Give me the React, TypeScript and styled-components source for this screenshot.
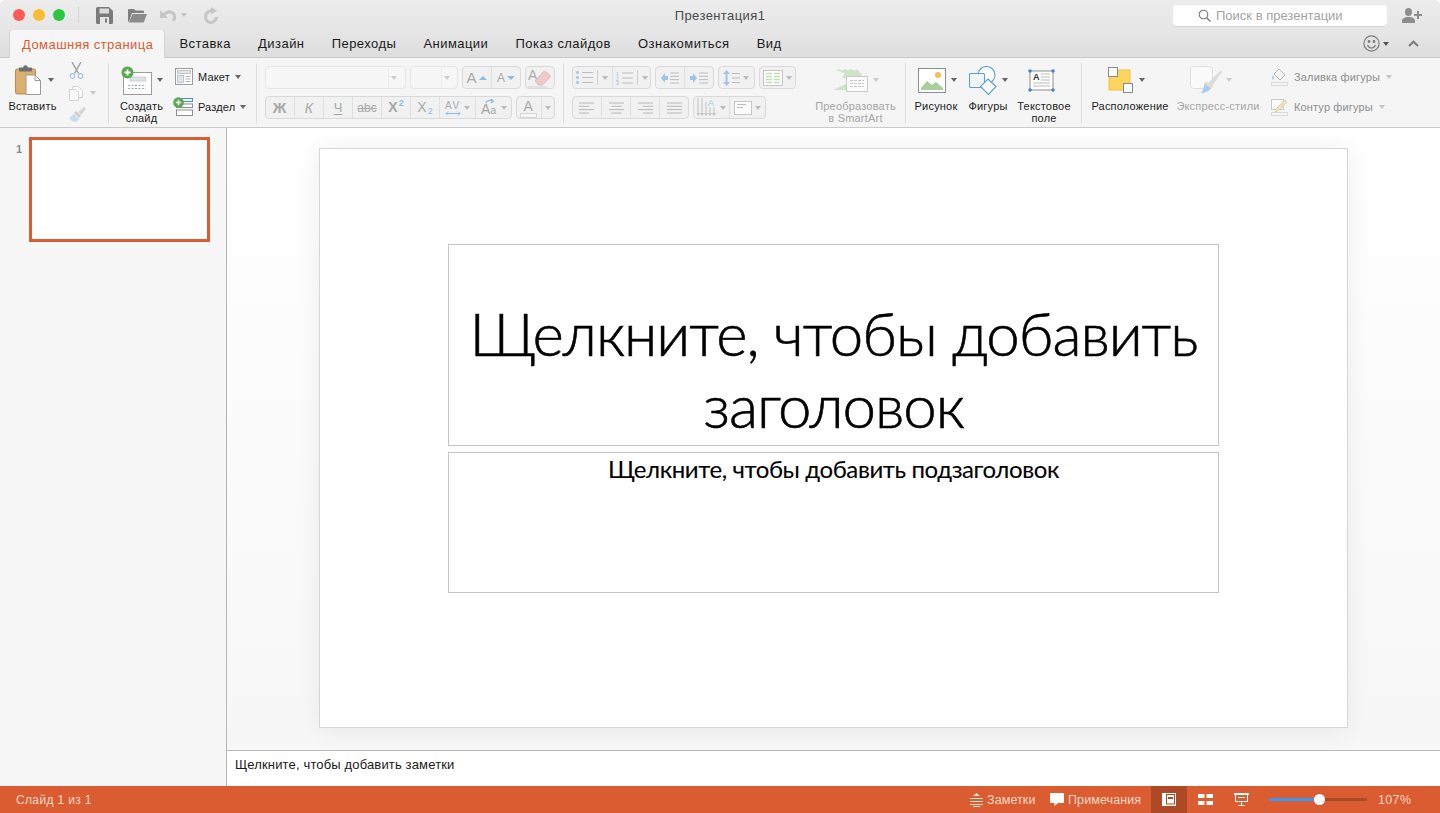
import React from 'react'
import styled, { createGlobalStyle } from 'styled-components'

const GlobalStyle = createGlobalStyle`
	html, body {
		margin: 0;
		padding: 0;
		height: 100%;
		background: #fff;
		overflow: hidden;
	}
	* {
		box-sizing: border-box;
	}
`

const Caret: React.FC<{ color?: string }> = ({ color = '#666' }) => (
	<CaretSvg width="6" height="4" viewBox="0 0 6 4">
		<path d="M0 0h6L3 4z" fill={color} />
	</CaretSvg>
)

const SaveIcon = () => (
	<svg width="17" height="17" viewBox="0 0 17 17">
		<path d="M1.5 0H13l4 4v11.5a1.5 1.5 0 0 1-1.5 1.5h-14A1.5 1.5 0 0 1 0 15.500v-14A1.500 1.500 0 0 1 1.500 0z" fill="#7b7b7b" />
		<rect x="3.500" y="1.500" width="9.500" height="5" fill="#dcdcdc" />
		<rect x="4" y="10" width="9" height="7" fill="#e6e6e6" />
		<rect x="9" y="11.500" width="2" height="4" fill="#7b7b7b" />
	</svg>
)

const FolderIcon = () => (
	<svg width="19" height="15" viewBox="0 0 19 15">
		<path d="M0 2a1 1 0 0 1 1-1h5l1.500 1.500H15a1 1 0 0 1 1 1V5H4L1.200 13 0 14z" fill="#7f7f7f" />
		<path d="M4.500 6H19l-3.300 8.500H.8z" fill="#8c8c8c" />
	</svg>
)

const UndoIcon = () => (
	<svg width="17" height="14" viewBox="0 0 17 14" fill="none">
		<path d="M0 2v8h8z" fill="#c6c6c6" />
		<path d="M3.500 7c2-2.500 4.500-3.500 7-3 2.500.6 4 2.800 4 5 0 1.500-.5 2.800-1 4" stroke="#c6c6c6" strokeWidth="3.200" />
	</svg>
)

const RedoIcon = () => (
	<svg width="14" height="17" viewBox="0 0 14 17" fill="none">
		<path d="M7 0v7.500l6-3.700z" fill="#c6c6c6" />
		<path d="M8.500 3.800C4 3.800 1.600 6.200 1.600 10s2.500 5.500 5.200 5.500 5.700-2.200 5.700-5.500" stroke="#c6c6c6" strokeWidth="3" />
	</svg>
)

const SearchIcon = () => (
	<svg width="13" height="13" viewBox="0 0 13 13" fill="none" stroke="#777" strokeWidth="1.100">
		<circle cx="5.500" cy="5.500" r="4.300" />
		<path d="M8.700 8.700L12.500 12.500" strokeWidth="1.300" />
	</svg>
)

const PersonPlusIcon = () => (
	<svg width="20" height="15" viewBox="0 0 20 15" fill="#8d8d8d">
		<ellipse cx="6.500" cy="4" rx="3.500" ry="4" />
		<path d="M0 15v-2.500c0-2 2.500-3 4.500-3.500h4c2 .5 4.500 1.500 4.500 3.500V15z" />
		<path d="M15 3h2v3h3v2h-3v3h-2V8h-3V6h3z" />
	</svg>
)

const SmileIcon = () => (
	<svg width="17" height="17" viewBox="0 0 17 17" fill="none" stroke="#7c7c7c" strokeWidth="1.200">
		<circle cx="8.500" cy="8.500" r="7.600" />
		<circle cx="6" cy="6.500" r=".8" fill="#7c7c7c" />
		<circle cx="11" cy="6.500" r=".8" fill="#7c7c7c" />
		<path d="M4.500 10c1 2.200 2.500 3 4 3s3-.8 4-3" />
	</svg>
)

const ChevronUpIcon = () => (
	<svg width="11" height="7" viewBox="0 0 11 7" fill="none" stroke="#7c7c7c" strokeWidth="2.200">
		<path d="M1 6l4.500-4.200L10 6" />
	</svg>
)

const PasteIcon = () => (
	<svg width="26" height="30" viewBox="0 0 26 30">
		<rect x="0.500" y="4" width="20" height="25" rx="1.500" fill="#dcaf6e" stroke="#b98d4e" />
		<rect x="4" y="2.500" width="13" height="4" rx="1" fill="#6f6f6f" />
		<circle cx="10.500" cy="2.500" r="2.200" fill="#6f6f6f" />
		<path d="M11 10h9l5.500 5.500V29.500H11z" fill="#fff" stroke="#9a9a9a" />
		<path d="M20 10v5.500h5.500" fill="none" stroke="#9a9a9a" />
	</svg>
)

const ScissorsIcon = () => (
	<svg width="15" height="17" viewBox="0 0 15 17" fill="none">
		<path d="M3 0l6.500 11.500M12 0L5.500 11.500" stroke="#a2a2a2" strokeWidth="1.500" />
		<circle cx="3.500" cy="14" r="2.300" stroke="#a5c5e5" strokeWidth="1.200" />
		<circle cx="11.500" cy="14" r="2.300" stroke="#a5c5e5" strokeWidth="1.200" />
	</svg>
)

const CopyIcon = () => (
	<svg width="14" height="15" viewBox="0 0 14 15" fill="#fafafa" stroke="#d2d2d2">
		<path d="M3.500 .5h6l4 4v7h-10z" />
		<path d="M.5 3.500h6l3 3v8h-9z" />
	</svg>
)

const BrushIcon = () => (
	<svg width="17" height="15" viewBox="0 0 17 15">
		<path d="M9 5l6-5 2 2-5 6z" fill="#d6d6d6" />
		<path d="M7 4l5 5-2 2-5-5z" fill="#cdcdcd" />
		<path d="M4.500 6.500L10 12l-3 3C4 15 1 13 0 10.500c2 0 3.500-2 4.500-4z" fill="#c7dcef" />
	</svg>
)

const NewSlideIcon = () => (
	<svg width="31" height="29" viewBox="0 0 31 29">
		<rect x="2.500" y="6.500" width="28" height="22" fill="#fff" stroke="#9c9c9c" />
		<rect x="9" y="11" width="16" height="4" fill="#dfe3e8" stroke="#b8bec6" strokeWidth=".6" />
		<path d="M7 19.500h18M7 22.500h18" stroke="#8eb4da" strokeDasharray="2 1.500" />
		<circle cx="6.500" cy="6.500" r="6" fill="#5aa84f" />
		<path d="M6.500 3.500v6M3.500 6.500h6" stroke="#fff" strokeWidth="1.800" />
	</svg>
)

const LayoutIcon = () => (
	<svg width="18" height="17" viewBox="0 0 18 17" fill="#fff" stroke="#9d9d9d">
		<rect x=".5" y=".5" width="17" height="16" />
		<rect x="2.500" y="2.500" width="13" height="3" fill="#e6e6e6" stroke="#b2b2b2" strokeWidth=".7" />
		<rect x="2.500" y="7.500" width="6" height="7" fill="#dce3ea" stroke="#a8b4c0" strokeWidth=".7" />
		<path d="M10.500 8.500h5M10.500 11h5M10.500 13.500h5" stroke="#a0a0a0" strokeWidth=".8" />
	</svg>
)

const SectionIcon = () => (
	<SectionSvg width="20" height="19" viewBox="0 0 20 19" fill="none">
		<rect x="8.500" y="1.500" width="11" height="3" stroke="#4a90d9" />
		<rect x="3.500" y="7" width="16" height="3.500" fill="#fff" stroke="#8f8f8f" />
		<rect x="3.500" y="13" width="16" height="5.500" fill="#fff" stroke="#8f8f8f" />
		<circle cx="5.500" cy="5.500" r="5.300" fill="#5aa84f" />
		<path d="M5.500 2.800v5.400M2.800 5.500h5.400" stroke="#fff" strokeWidth="1.500" />
	</SectionSvg>
)

const EraserIcon = () => (
	<svg width="24" height="21" viewBox="0 0 24 21">
		<text x="0" y="13" fontFamily="Liberation Sans" fontSize="14" fill="#aaa">A</text>
		<path d="M7 14l8-9c1-1 2-1 3 0l3.500 3c1 1 1 2 0 3l-7 7h-4z" fill="#efcaca" stroke="#d5aeae" strokeWidth=".7" />
		<path d="M0 20h20" stroke="#d2d2d2" />
	</svg>
)

const CharSpacingIcon = () => (
	<svg width="16" height="16" viewBox="0 0 16 16">
		<text x="0" y="9" fontFamily="Liberation Sans" fontSize="10" letterSpacing="1.500" fill="#aaa">AV</text>
		<path d="M1 13.500h14M3 11.500l-2 2 2 2M13 11.500l2 2-2 2" fill="none" stroke="#8dbbe8" />
	</svg>
)

const ChangeCaseIcon = () => (
	<svg width="17" height="17" viewBox="0 0 17 17">
		<text x="0" y="15" fontFamily="Liberation Sans" fontSize="14" fill="#a3a3a3">A</text>
		<text x="9.500" y="15" fontFamily="Liberation Sans" fontSize="10" fill="#a3a3a3">a</text>
		<path d="M5 4c1-2.500 4-3 7-2M10 0l2.500 2-2.500 2" fill="none" stroke="#8dbbe8" strokeWidth="1.200" />
	</svg>
)

const FontColorIcon = () => (
	<svg width="18" height="20" viewBox="0 0 18 20">
		<text x="3.500" y="13" fontFamily="Liberation Sans" fontSize="14" fill="#a9a9a9">A</text>
		<rect x=".5" y="15.500" width="16" height="4" fill="#f6f6f6" stroke="#d6d6d6" />
	</svg>
)

const BulletsIcon = () => (
	<svg width="17" height="13" viewBox="0 0 17 13">
		<circle cx="1.500" cy="1.500" r="1.400" fill="#9fc4e8" />
		<circle cx="1.500" cy="6.500" r="1.400" fill="#9fc4e8" />
		<circle cx="1.500" cy="11.500" r="1.400" fill="#9fc4e8" />
		<path d="M6 1.500h11M6 6.500h11M6 11.500h11" stroke="#bdbdbd" />
	</svg>
)

const NumberedIcon = () => (
	<svg width="17" height="14" viewBox="0 0 17 14">
		<text x="0" y="4.500" fontFamily="Liberation Sans" fontSize="5" fill="#8dbbe8">1</text>
		<text x="0" y="9.500" fontFamily="Liberation Sans" fontSize="5" fill="#8dbbe8">2</text>
		<text x="0" y="14" fontFamily="Liberation Sans" fontSize="5" fill="#8dbbe8">3</text>
		<path d="M6 2h11M6 7h11M6 12h11" stroke="#bdbdbd" />
	</svg>
)

const IndentIcon: React.FC<{ right?: boolean }> = ({ right }) => (
	<svg width="18" height="12" viewBox="0 0 18 12">
		<path d={right ? 'M0 4h3V1l4 5-4 5V8H0z' : 'M7 4H4V1L0 6l4 5V8h3z'} fill="#9fc4e8" />
		<path d="M9 1h9M9 4.300h9M9 7.600h9M9 11h9" stroke="#bdbdbd" />
	</svg>
)

const LineSpacingIcon = () => (
	<svg width="17" height="16" viewBox="0 0 17 16">
		<path d="M3.500 0L7 4H0zM3.500 16L0 12h7z" fill="#9fc4e8" />
		<path d="M2.500 4h2v8h-2z" fill="#9fc4e8" />
		<path d="M9 3.500h8M9 8h8M9 12.500h8" stroke="#bdbdbd" />
	</svg>
)

const ColumnsIcon = () => (
	<svg width="20" height="16" viewBox="0 0 20 16">
		<rect x=".5" y=".5" width="19" height="15" fill="#fff" stroke="#c6c6c6" />
		<path d="M3 3.500h6M3 6.500h6M3 9.500h6M3 12.500h6M11 3.500h6M11 6.500h6M11 9.500h6M11 12.500h6" stroke="#c0e0b8" strokeWidth="1.500" />
	</svg>
)

const AlignIcon: React.FC<{ kind: 'left' | 'center' | 'right' | 'justify' }> = ({ kind }) => {
	const lines = {
		left: 'M0 1h15M0 4.300h10M0 7.600h15M0 11h10',
		center: 'M0 1h15M2.500 4.300h10M0 7.600h15M2.500 11h10',
		right: 'M0 1h15M5 4.300h10M0 7.600h15M5 11h10',
		justify: 'M0 1h15M0 4.300h15M0 7.600h15M0 11h15',
	}
	return (
		<svg width="15" height="12" viewBox="0 0 15 12">
			<path d={lines[kind]} stroke="#b8b8b8" />
		</svg>
	)
}

const TextDirIcon = () => (
	<svg width="20" height="19" viewBox="0 0 20 19">
		<path d="M1 0v15M5 0v15M9 4v11M13 9v6M17 9v6" stroke="#c2c2c2" />
		<path d="M-1 15l2 3 2-3zM3 15l2 3 2-3zM7 15l2 3 2-3zM11 15l2 3 2-3zM15 15l2 3 2-3z" fill="#c2c2c2" />
		<text x="11" y="8" fontFamily="Liberation Sans" fontSize="9" fill="#9fc4e8">A</text>
	</svg>
)

const TextAlignBoxIcon = () => (
	<svg width="18" height="14" viewBox="0 0 18 14">
		<rect x=".5" y=".5" width="17" height="13" fill="#fbfbfb" stroke="#c6c6c6" />
		<path d="M3 3.500h9M3 6.500h6" stroke="#bdbdbd" />
	</svg>
)

const SmartArtIcon = () => (
	<svg width="35" height="24" viewBox="0 0 35 24">
		<path d="M0 1l3 1.500L6 1l3 1.500L12 1l3 1.500L18 1l3 1.500L24 1l5 6v3l-6 1L9 10l3-4.500z" fill="#cfe4c6" />
		<path d="M0 22h20l6-11-8-1-5 6z" fill="#cfe4c6" />
		<rect x="13.500" y="8.500" width="21" height="15" fill="#fbfbfb" stroke="#c9c9c9" />
		<path d="M17 12.500h14M17 15.500h14M17 18.500h14" stroke="#c9c9c9" strokeDasharray="3 1" />
	</svg>
)

const PictureIcon = () => (
	<svg width="28" height="25" viewBox="0 0 28 25">
		<rect x=".5" y=".5" width="27" height="24" fill="#fff" stroke="#8f8f8f" />
		<path d="M3 20l6-7 5 4 4-3 7 6z" fill="#a9cf9b" />
		<path d="M3 22h22v-2H3z" fill="#a9cf9b" />
		<circle cx="20" cy="7" r="3" fill="#f2c14e" />
	</svg>
)

const ShapesIcon = () => (
	<svg width="28" height="29" viewBox="0 0 28 29" fill="none" stroke="#5a9de0" strokeWidth="1.100">
		<circle cx="17.500" cy="9" r="8.500" fill="#fff" />
		<rect x=".5" y="7.500" width="15" height="14" rx="1" fill="#f2f7fc" />
		<path d="M19 13l8 7.500-7.500 8-8-8z" fill="#fff" />
	</svg>
)

const TextBoxIcon = () => (
	<svg width="27" height="23" viewBox="0 0 27 23">
		<rect x="2" y="2" width="23" height="19" fill="#fff" stroke="#8e8e8e" />
		<text x="5" y="11" fontFamily="Liberation Sans" fontWeight="700" fontSize="9" fill="#333">A</text>
		<path d="M13 5h9M13 8h9M13 11h9M5 14h17M5 17h17" stroke="#a8a8a8" strokeWidth=".8" />
		<g fill="#3f86d6">
			<circle cx="2" cy="2" r="1.800" />
			<circle cx="25" cy="2" r="1.800" />
			<circle cx="2" cy="21" r="1.800" />
			<circle cx="25" cy="21" r="1.800" />
		</g>
	</svg>
)

const ArrangeIcon = () => (
	<svg width="26" height="26" viewBox="0 0 26 26">
		<rect x="1" y="3" width="21" height="20" fill="#fdd45e" stroke="#efc243" />
		<rect x=".5" y=".5" width="9" height="9" fill="#fff" stroke="#8a8a8a" />
		<rect x="15.500" y="16.500" width="9" height="9" fill="#fff" stroke="#8a8a8a" />
	</svg>
)

const QuickStylesIcon = () => (
	<svg width="33" height="28" viewBox="0 0 33 28">
		<rect x=".5" y=".5" width="22" height="22" rx="3" fill="#fafafa" stroke="#dedede" />
		<path d="M18 17L30 5c1.200-1 2.500 0 1.800 1.500L22 20z" fill="#dcdcdc" />
		<path d="M16 15.500l7 5-1.500 1.500-7-4.500z" fill="#e9dcbc" />
		<path d="M14.500 17.500l6.500 4.500c-2 3.500-6 5-10 5 2-2 3-6 3.500-9.500z" fill="#a9cbed" />
	</svg>
)

const FillIcon = () => (
	<svg width="17" height="18" viewBox="0 0 17 18">
		<path d="M8 1l6 6-5 5-6-6z" fill="#f4f4f4" stroke="#b9b9b9" />
		<path d="M2 7c-1 2-1.500 3-1 4s2 .5 2-1z" fill="#a9cbed" />
		<rect x=".5" y="14.500" width="16" height="3" fill="#f6f6f6" stroke="#dadada" />
	</svg>
)

const OutlineIcon = () => (
	<svg width="17" height="18" viewBox="0 0 17 18">
		<rect x=".5" y="1.500" width="12" height="10" fill="#fafafa" stroke="#c9c9c9" />
		<path d="M5 11l9-9 2 2-9 9-3 1z" fill="#efe1b8" stroke="#cdbb8d" strokeWidth=".5" />
		<rect x=".5" y="14.500" width="16" height="3" fill="#f6f6f6" stroke="#dadada" />
	</svg>
)

const NotesIcon = () => (
	<svg width="13" height="14" viewBox="0 0 13 14" fill="#fbe5da">
		<path d="M6.500 0L10 3H3z" />
		<path d="M0 5h13v1H0zM0 8h13v1H0zM0 11h13v1H0zM3 13h7v1H3z" />
	</svg>
)

const CommentIcon = () => (
	<svg width="14" height="13" viewBox="0 0 14 13" fill="#fff">
		<path d="M1 0h12a1 1 0 0 1 1 1v8a1 1 0 0 1-1 1H8l-3.500 3V10H1a1 1 0 0 1-1-1V1a1 1 0 0 1 1-1z" />
	</svg>
)

const NormalViewIcon = () => (
	<svg width="14" height="13" viewBox="0 0 14 13">
		<path d="M0 0h14v13H0z" fill="#fff" />
		<path d="M4 1h9v10.500H4z" fill="#ad4925" />
		<path d="M5 2h7v8.500H5z" fill="#fff" />
		<rect x="6" y="4" width="5" height="2" fill="#ad4925" />
	</svg>
)

const GridViewIcon = () => (
	<svg width="15" height="11" viewBox="0 0 15 11" fill="#fff">
		<rect width="6.500" height="4" />
		<rect x="8.500" width="6.500" height="4" />
		<rect y="7" width="6.500" height="4" />
		<rect x="8.500" y="7" width="6.500" height="4" />
	</svg>
)

const PresenterIcon = () => (
	<svg width="15" height="13" viewBox="0 0 15 13" fill="none" stroke="#fff">
		<path d="M0 1h15" strokeWidth="2" />
		<rect x="1.500" y="1.500" width="12" height="7" />
		<path d="M4 4.500h7" />
		<path d="M7.500 8.500v3.500M4.500 12.500h6" />
	</svg>
)

const App: React.FC = () => {
	return (
		<>
			<GlobalStyle />
			<Window>
				<TitleBar>
					<QuickTools>
						<TrafficLights>
							<Light $color="#fc5b57" />
							<Light $color="#fdbb2e" />
							<Light $color="#28c83f" />
						</TrafficLights>
						<TitleSep />
						<QuickSlot $left={17}><SaveIcon /></QuickSlot>
						<QuickSlot $left={15}><FolderIcon /></QuickSlot>
						<QuickSlot $left={13}><UndoIcon /><Caret color="#c4c4c4" /></QuickSlot>
						<QuickSlot $left={17}><RedoIcon /></QuickSlot>
					</QuickTools>
					<WindowTitle>Презентация1</WindowTitle>
					<TitleRight>
						<SearchBox>
							<SearchIcon />
							<SearchText>Поиск в презентации</SearchText>
						</SearchBox>
						<PersonPlusIcon />
					</TitleRight>
				</TitleBar>

				<TabBar>
					<Tab $active>Домашняя страница</Tab>
					<Tab>Вставка</Tab>
					<Tab>Дизайн</Tab>
					<Tab>Переходы</Tab>
					<Tab>Анимации</Tab>
					<Tab>Показ слайдов</Tab>
					<Tab>Ознакомиться</Tab>
					<Tab>Вид</Tab>
					<TabBarRight>
						<SmileWrap><SmileIcon /><Caret color="#555" /></SmileWrap>
						<ChevronUpIcon />
					</TabBarRight>
				</TabBar>

				<Ribbon>
					<RibbonGroup $width={108}>
						<LargeButton $width={57} $shift={4}>
							<LargeIconRow $padLeft={4} $gap={7}>
								<PasteIcon />
								<Caret />
							</LargeIconRow>
							<LargeLabel>Вставить</LargeLabel>
						</LargeButton>
						<ClipColumn>
							<ScissorsIcon />
							<ClipRow><CopyIcon /><Caret color="#c8c8c8" /></ClipRow>
							<BrushIcon />
						</ClipColumn>
					</RibbonGroup>
					<GroupSep />

					<RibbonGroup $width={147}>
						<LargeButton $width={65}>
							<LargeIconRow>
								<NewSlideIcon />
								<Caret />
							</LargeIconRow>
							<LargeLabel>Создать<br />слайд</LargeLabel>
						</LargeButton>
						<SmallColumn $left={1}>
							<SmallRow><LayoutIcon /><SmallText>Макет</SmallText><Caret /></SmallRow>
							<SmallRow><SectionIcon /><SmallText>Раздел</SmallText><Caret /></SmallRow>
						</SmallColumn>
					</RibbonGroup>
					<GroupSep />

					<ToolsGroup $width={306}>
						<ToolRow>
							<ComboBox $width={141} $field={122}><Caret color="#ccc" /></ComboBox>
							<ComboBox $width={48} $field={30}><Caret color="#ccc" /></ComboBox>
							<ToolGroup>
								<ToolButton $width={29}><BigA>A</BigA><Tri $color="#8dbbe8" /></ToolButton>
								<ToolButton $width={29}><MidA>A</MidA><Tri $color="#8dbbe8" $down /></ToolButton>
							</ToolGroup>
							<ToolGroup>
								<ToolButton $width={29}><EraserIcon /></ToolButton>
							</ToolGroup>
						</ToolRow>
						<ToolRow>
							<ToolGroup>
								<ToolButton $width={29}><BoldGlyph>Ж</BoldGlyph></ToolButton>
								<ToolButton $width={29}><ItalicGlyph>К</ItalicGlyph></ToolButton>
								<ToolButton $width={29}><UnderGlyph>Ч</UnderGlyph></ToolButton>
								<ToolButton $width={29}><StrikeGlyph>abc</StrikeGlyph></ToolButton>
								<ToolButton $width={29}><ScriptGlyph $bold>X<Sup>2</Sup></ScriptGlyph></ToolButton>
								<ToolButton $width={29}><ScriptGlyph>X<Sub>2</Sub></ScriptGlyph></ToolButton>
								<ToolButton $width={36}><CharSpacingIcon /><Caret color="#bbb" /></ToolButton>
								<ToolButton $width={36}><ChangeCaseIcon /><Caret color="#bbb" /></ToolButton>
							</ToolGroup>
							<ToolGroup>
								<ToolButton $width={25}><FontColorIcon /></ToolButton>
								<ToolButton $width={13}><Caret color="#bbb" /></ToolButton>
							</ToolGroup>
						</ToolRow>
					</ToolsGroup>
					<GroupSep />

					<ToolsGroup $width={242}>
						<ToolRow>
							<ToolGroup>
								<ToolButton $width={40}><BulletsIcon /><InnerSep /><Caret color="#bbb" /></ToolButton>
								<ToolButton $width={38}><NumberedIcon /><InnerSep /><Caret color="#bbb" /></ToolButton>
							</ToolGroup>
							<ToolGroup>
								<ToolButton $width={29}><IndentIcon /></ToolButton>
								<ToolButton $width={29}><IndentIcon right /></ToolButton>
							</ToolGroup>
							<ToolGroup>
								<ToolButton $width={36}><LineSpacingIcon /><Caret color="#bbb" /></ToolButton>
							</ToolGroup>
							<ToolGroup>
								<ToolButton $width={36}><ColumnsIcon /><Caret color="#bbb" /></ToolButton>
							</ToolGroup>
						</ToolRow>
						<ToolRow>
							<ToolGroup>
								<ToolButton $width={29}><AlignIcon kind="left" /></ToolButton>
								<ToolButton $width={29}><AlignIcon kind="center" /></ToolButton>
								<ToolButton $width={29}><AlignIcon kind="right" /></ToolButton>
								<ToolButton $width={29}><AlignIcon kind="justify" /></ToolButton>
							</ToolGroup>
							<ToolGroup>
								<ToolButton $width={36}><TextDirIcon /><Caret color="#bbb" /></ToolButton>
								<ToolButton $width={36}><TextAlignBoxIcon /><Caret color="#bbb" /></ToolButton>
							</ToolGroup>
						</ToolRow>
					</ToolsGroup>
					<LargeButton $width={99} $disabled>
						<LargeIconRow>
							<SmartArtIcon />
							<Caret color="#ccc" />
						</LargeIconRow>
						<LargeLabel>Преобразовать<br />в SmartArt</LargeLabel>
					</LargeButton>
					<GroupSep />

					<RibbonGroup $width={175}>
						<LargeButton $width={60}>
							<LargeIconRow $padLeft={2}>
								<PictureIcon />
								<Caret />
							</LargeIconRow>
							<LargeLabel>Рисунок</LargeLabel>
						</LargeButton>
						<LargeButton $width={44}>
							<LargeIconRow>
								<ShapesIcon />
								<Caret />
							</LargeIconRow>
							<LargeLabel>Фигуры</LargeLabel>
						</LargeButton>
						<LargeButton $width={68}>
							<LargeIconRow $padRight={6}>
								<TextBoxIcon />
							</LargeIconRow>
							<LargeLabel>Текстовое<br />поле</LargeLabel>
						</LargeButton>
					</RibbonGroup>
					<GroupSep />

					<RibbonGroup $width={0}>
						<LargeButton $width={96}>
							<LargeIconRow $padRight={8}>
								<ArrangeIcon />
								<Caret />
							</LargeIconRow>
							<LargeLabel>Расположение</LargeLabel>
						</LargeButton>
						<LargeButton $width={86} $shift={-3} $disabled>
							<LargeIconRow $padRight={14} $gap={3}>
								<QuickStylesIcon />
								<Caret color="#ccc" />
							</LargeIconRow>
							<LargeLabel>Экспресс-стили</LargeLabel>
						</LargeButton>
						<SmallColumn $left={10}>
							<SmallRow $muted><FillIcon /><SmallText>Заливка фигуры</SmallText><Caret color="#c4c4c4" /></SmallRow>
							<SmallRow $muted><OutlineIcon /><SmallText>Контур фигуры</SmallText><Caret color="#c4c4c4" /></SmallRow>
						</SmallColumn>
					</RibbonGroup>
				</Ribbon>

				<Workspace>
					<SlidePane>
						<SlideNumber>1</SlideNumber>
						<Thumbnail />
					</SlidePane>
					<EditorColumn>
						<Canvas>
							<Slide>
								<TitlePlaceholder>Щелкните, чтобы добавить заголовок</TitlePlaceholder>
								<SubtitlePlaceholder>Щелкните, чтобы добавить подзаголовок</SubtitlePlaceholder>
							</Slide>
						</Canvas>
						<NotesPane>Щелкните, чтобы добавить заметки</NotesPane>
					</EditorColumn>
				</Workspace>

				<StatusBar>
					<SlideCount>Слайд 1 из 1</SlideCount>
					<StatusRight>
						<StatusItem $width={80}><NotesIcon />Заметки</StatusItem>
						<StatusItem $width={101}><CommentIcon />Примечания</StatusItem>
						<ViewTab $active><NormalViewIcon /></ViewTab>
						<ViewTab><GridViewIcon /></ViewTab>
						<ViewTab><PresenterIcon /></ViewTab>
						<ZoomSlider>
							<ZoomFill />
							<ZoomThumb />
							<ZoomRest />
						</ZoomSlider>
						<ZoomValue>107%</ZoomValue>
					</StatusRight>
				</StatusBar>
			</Window>
		</>
	)
}

const uiFont = `'Liberation Sans', Arial, sans-serif`
const slideFont = `Lato, 'Open Sans', sans-serif`

const CaretSvg = styled.svg`
	flex: none;
`

const SectionSvg = styled.svg`
	margin-left: -2px;
`

const Window = styled.div`
	display: flex;
	flex-direction: column;
	width: 1440px;
	height: 813px;
	overflow: hidden;
	border-radius: 5px 5px 0 0;
	font-family: ${uiFont};
	background: #fff;
`

const TitleBar = styled.div`
	display: flex;
	align-items: center;
	position: relative;
	height: 30px;
	flex: none;
	background: linear-gradient(#ececec, #e6e6e6);
	padding-right: 18px;
`

const QuickTools = styled.div`
	display: flex;
	align-items: center;
	flex: 1;
	padding-left: 13px;
`

const TrafficLights = styled.div`
	display: flex;
	gap: 8px;
`

const Light = styled.span<{ $color: string }>`
	width: 12px;
	height: 12px;
	border-radius: 50%;
	background: ${(props) => props.$color};
`

const TitleSep = styled.span`
	width: 1px;
	height: 16px;
	margin-left: 13px;
	background: #d4d4d4;
`

const QuickSlot = styled.span<{ $left: number }>`
	display: flex;
	align-items: center;
	gap: 4px;
	margin-left: ${(props) => props.$left}px;
`

const WindowTitle = styled.div`
	position: absolute;
	left: 0;
	right: 0;
	text-align: center;
	font-size: 13px;
	letter-spacing: 0.4px;
	color: #4a4a4a;
	pointer-events: none;
`

const TitleRight = styled.div`
	display: flex;
	align-items: center;
	gap: 15px;
`

const SearchBox = styled.div`
	display: flex;
	align-items: center;
	gap: 5px;
	width: 214px;
	height: 21px;
	padding-left: 25px;
	background: #fff;
	border-radius: 4px;
	box-shadow: 0 1px 0 #d6d6d6;
`

const SearchText = styled.span`
	font-size: 13px;
	color: #a3a3a3;
`

const TabBar = styled.div`
	display: flex;
	align-items: flex-end;
	height: 28px;
	flex: none;
	padding-left: 10px;
	background: linear-gradient(#e6e6e6, #dedede);
	border-bottom: 1px solid #c9c9c9;
`

const Tab = styled.div<{ $active?: boolean }>`
	display: flex;
	align-items: center;
	height: ${(props) => (props.$active ? '28px' : '27px')};
	margin-bottom: ${(props) => (props.$active ? '-1px' : '0')};
	margin-right: ${(props) => (props.$active ? '1.500px' : '0')};
	padding: ${(props) => (props.$active ? '0 11px 0 12px' : '0 13.600px')};
	font-size: 13px;
	letter-spacing: 0.45px;
	color: ${(props) => (props.$active ? '#dc5c31' : '#1a1a1a')};
	background: ${(props) => (props.$active ? '#f6f6f6' : 'transparent')};
	border-radius: ${(props) => (props.$active ? '3px 3px 0 0' : '0')};
	box-shadow: ${(props) => (props.$active ? '0 0 0 1px #d4d4d4' : 'none')};
`

const TabBarRight = styled.div`
	display: flex;
	align-items: center;
	align-self: center;
	gap: 19px;
	margin-left: auto;
	padding-right: 21px;
`

const SmileWrap = styled.span`
	display: flex;
	align-items: center;
	gap: 3px;
`

const Ribbon = styled.div`
	display: flex;
	align-items: center;
	height: 70px;
	flex: none;
	background: #f5f5f5;
	border-bottom: 1px solid #cbcbcb;
`

const RibbonGroup = styled.div<{ $width: number }>`
	display: flex;
	align-items: flex-start;
	height: 100%;
	width: ${(props) => (props.$width ? `${props.$width}px` : 'auto')};
	flex: ${(props) => (props.$width ? 'none' : '1')};
`

const GroupSep = styled.div`
	width: 1px;
	height: 60px;
	flex: none;
	background: #dedede;
`

const LargeButton = styled.div<{ $width: number; $shift?: number; $disabled?: boolean }>`
	display: flex;
	flex-direction: column;
	align-items: center;
	flex: none;
	width: ${(props) => props.$width}px;
	margin-left: ${(props) => props.$shift || 0}px;
	height: 100%;
	color: ${(props) => (props.$disabled ? '#a6a6a6' : '#1c1c1c')};
`

const LargeIconRow = styled.div<{ $padLeft?: number; $padRight?: number; $gap?: number }>`
	display: flex;
	align-items: center;
	justify-content: center;
	gap: ${(props) => props.$gap ?? 5}px;
	height: 30px;
	margin-top: 7px;
	margin-bottom: 5px;
	padding-left: ${(props) => props.$padLeft || 0}px;
	padding-right: ${(props) => props.$padRight || 0}px;
`

const LargeLabel = styled.div`
	font-size: 11px;
	line-height: 12px;
	letter-spacing: 0.2px;
	text-align: center;
	white-space: nowrap;
`

const ClipColumn = styled.div`
	display: flex;
	flex-direction: column;
	align-items: flex-start;
	justify-content: space-between;
	height: 60px;
	margin-top: 4px;
	padding-left: 8px;
	width: 40px;
`

const ClipRow = styled.div`
	display: flex;
	align-items: center;
	gap: 7px;
`

const SmallColumn = styled.div<{ $left: number }>`
	display: flex;
	flex-direction: column;
	gap: 11px;
	margin-left: ${(props) => props.$left}px;
	padding-top: 9px;
`

const SmallRow = styled.div<{ $muted?: boolean }>`
	display: flex;
	align-items: center;
	gap: ${(props) => (props.$muted ? '6px' : '5px')};
	height: 19px;
	color: ${(props) => (props.$muted ? '#8e8e8e' : '#1c1c1c')};
`

const SmallText = styled.span`
	font-size: 11px;
	letter-spacing: 0.15px;
	white-space: nowrap;
`

const ToolsGroup = styled.div<{ $width: number }>`
	display: flex;
	flex-direction: column;
	gap: 7px;
	flex: none;
	align-self: flex-start;
	width: ${(props) => props.$width}px;
	padding-left: 8px;
	padding-top: 8px;
`

const ToolRow = styled.div`
	display: flex;
	gap: 4px;
`

const ToolGroup = styled.div`
	display: flex;
	height: 23px;
	border: 1px solid #d9d9d9;
	border-radius: 4px;
	background: #f1f1f1;
	overflow: hidden;
`

const ToolButton = styled.div<{ $width: number }>`
	display: flex;
	align-items: center;
	justify-content: center;
	gap: 3px;
	width: ${(props) => props.$width}px;
	color: #a8a8a8;
	&:not(:first-child) {
		border-left: 1px solid #dfdfdf;
	}
	&:first-child {
		margin-left: -1px;
	}
`

const ComboBox = styled.div<{ $width: number; $field: number }>`
	display: flex;
	align-items: center;
	width: ${(props) => props.$width}px;
	height: 23px;
	padding-left: ${(props) => props.$field + 3}px;
	border: 1px solid #e6e6e6;
	border-radius: 4px;
	background: linear-gradient(to right, #f7f7f7 ${(props) => props.$field}px, #ececec ${(props) => props.$field}px, #ececec ${(props) => props.$field + 1}px, #f7f7f7 ${(props) => props.$field + 1}px);
`

const InnerSep = styled.span`
	width: 1px;
	height: 15px;
	background: #cfcfcf;
	margin: 0 1px;
`

const BigA = styled.span`
	font-size: 15px;
`

const MidA = styled.span`
	font-size: 12px;
`

const Tri = styled.span<{ $color: string; $down?: boolean }>`
	width: 0;
	height: 0;
	margin-left: -1px;
	border-left: 4px solid transparent;
	border-right: 4px solid transparent;
	border-${(props) => (props.$down ? 'top' : 'bottom')}: 4px solid ${(props) => props.$color};
`

const BoldGlyph = styled.span`
	font-size: 15px;
	font-weight: 700;
`

const ItalicGlyph = styled.span`
	font-size: 14px;
	font-style: italic;
`

const UnderGlyph = styled.span`
	font-size: 13px;
	text-decoration: underline;
	text-underline-offset: 2px;
`

const StrikeGlyph = styled.span`
	font-size: 12px;
	text-decoration: line-through;
`

const ScriptGlyph = styled.span<{ $bold?: boolean }>`
	display: flex;
	align-items: center;
	height: 19px;
	line-height: 19px;
	font-size: 14px;
	font-weight: ${(props) => (props.$bold ? 700 : 400)};
	color: #a8a8a8;
`

const Sup = styled.span`
	align-self: flex-start;
	height: 11px;
	line-height: 11px;
	margin-left: 1px;
	font-size: 9px;
	color: #8dbbe8;
`

const Sub = styled.span`
	align-self: flex-end;
	height: 11px;
	line-height: 11px;
	margin-left: 1px;
	font-size: 9px;
	color: #8dbbe8;
`

const Workspace = styled.div`
	display: flex;
	flex: 1;
	min-height: 0;
`

const SlidePane = styled.div`
	display: flex;
	align-items: flex-start;
	flex: none;
	width: 227px;
	padding: 9px 0 0 16px;
	background: #f7f7f7;
	border-right: 1px solid #b5b5b5;
`

const SlideNumber = styled.div`
	width: 13px;
	font-size: 11px;
	line-height: 24px;
	font-weight: 700;
	color: #8a8a8a;
`

const Thumbnail = styled.div`
	width: 181px;
	height: 105px;
	background: #fff;
	border: 3px solid #dc5c31;
`

const EditorColumn = styled.div`
	display: flex;
	flex-direction: column;
	flex: 1;
	min-width: 0;
`

const Canvas = styled.div`
	display: flex;
	flex: 1;
	min-height: 0;
	padding: 20px 92px 22px 92px;
	background: linear-gradient(#fff, #f7f7f7);
`

const Slide = styled.div`
	display: flex;
	flex-direction: column;
	flex: 1;
	gap: 6px;
	padding: 95px 128px 0;
	background: #fff;
	border: 1px solid #d6d6d6;
	box-shadow: 0 2px 24px rgba(0, 0, 0, 0.07);
`

const TitlePlaceholder = styled.div`
	flex: none;
	height: 202px;
	padding: 52px 0 0;
	border: 1px solid #c4c4c4;
	font-family: ${slideFont};
	font-weight: 300;
	font-size: 60px;
	line-height: 72px;
	letter-spacing: -1.050px;
	-webkit-text-stroke: 0.600px #000;
	text-align: center;
	color: #000;
`

const SubtitlePlaceholder = styled.div`
	flex: none;
	height: 141px;
	padding-top: 1px;
	border: 1px solid #c4c4c4;
	font-family: ${slideFont};
	font-size: 24px;
	line-height: 30px;
	letter-spacing: -0.400px;
	-webkit-text-stroke: 0.100px #000;
	text-align: center;
	color: #000;
`

const NotesPane = styled.div`
	flex: none;
	height: 36px;
	padding: 6px 0 0 8px;
	border-top: 1px solid #b9b9b9;
	background: #fff;
	font-size: 13px;
	line-height: 16px;
	letter-spacing: 0.15px;
	color: #1a1a1a;
`

const StatusBar = styled.div`
	display: flex;
	align-items: center;
	flex: none;
	height: 27px;
	padding-left: 16px;
	background: #dc5c31;
	color: #f9d9ca;
	font-size: 12px;
	letter-spacing: 0.35px;
`

const SlideCount = styled.div`
	flex: 1;
`

const StatusRight = styled.div`
	display: flex;
	align-items: center;
	height: 100%;
`

const StatusItem = styled.div<{ $width: number }>`
	display: flex;
	align-items: center;
	gap: 4px;
	width: ${(props) => props.$width}px;
	font-size: 12.500px;
	letter-spacing: 0.1px;
`

const ViewTab = styled.div<{ $active?: boolean }>`
	display: flex;
	align-items: center;
	justify-content: center;
	width: 36px;
	height: 100%;
	background: ${(props) => (props.$active ? '#ad4925' : 'transparent')};
`

const ZoomSlider = styled.div`
	display: flex;
	align-items: center;
	width: 98px;
	margin-left: 10px;
`

const ZoomFill = styled.div`
	width: 45px;
	height: 3px;
	border-radius: 2px 0 0 2px;
	background: #3d94f6;
`

const ZoomThumb = styled.div`
	flex: none;
	width: 11px;
	height: 11px;
	border-radius: 50%;
	background: #fff;
`

const ZoomRest = styled.div`
	flex: 1;
	height: 3px;
	border-radius: 0 2px 2px 0;
	background: #a94a28;
`

const ZoomValue = styled.div`
	width: 73px;
	padding-left: 11px;
	font-size: 12.500px;
`

export default App
